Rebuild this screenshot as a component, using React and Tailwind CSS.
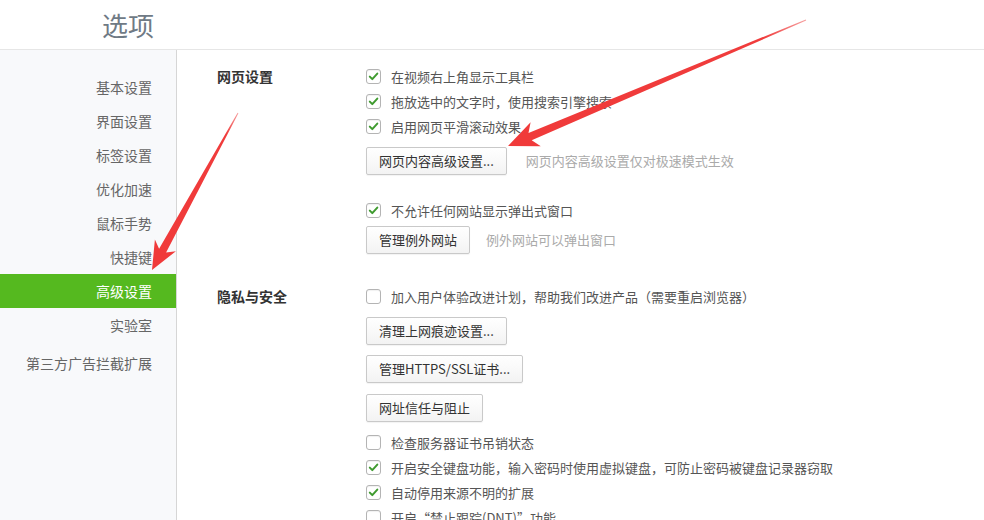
import React from "react";

const font = { fontFamily: '"Noto Sans CJK SC", "Noto Sans", sans-serif' };

function Check({ checked, label }) {
  return (
    <div className="flex items-center h-[25px]">
      <span className="w-[15px] h-[15px] rounded-[3px] border border-[#b4b4b4] bg-white flex items-center justify-center shadow-[inset_0_1px_1px_rgba(0,0,0,0.06)]">
        {checked && (
          <svg width="11" height="11" viewBox="0 0 11 11">
            <path d="M1.8 5.6 L4.3 8.1 L9.3 2.6" fill="none" stroke="#3f9b2f" strokeWidth="2" strokeLinecap="round" strokeLinejoin="round" />
          </svg>
        )}
      </span>
      <span className="ml-[10px] text-[13px] text-[#555]">{label}</span>
    </div>
  );
}

function Btn({ children, hint, hintGap = "ml-[19px]", className = "" }) {
  return (
    <div className={"flex items-center " + className}>
      <button className="h-[28px] px-[12px] border border-[#c9c9c9] rounded-[2px] bg-gradient-to-b from-white to-[#f3f3f3] text-[13px] text-[#333] shadow-[0_1px_1px_rgba(0,0,0,0.05)]">
        {children}
      </button>
      {hint && <span className={hintGap + " text-[13px] text-[#aaa]"}>{hint}</span>}
    </div>
  );
}

const items = ["基本设置", "界面设置", "标签设置", "优化加速", "鼠标手势", "快捷键", "高级设置", "实验室"];

export default function App() {
  return (
    <div className="relative w-[984px] h-[520px] overflow-hidden bg-white" style={font}>
      <div className="h-[50px] border-b border-[#e6e6e6] flex items-center pl-[102px]">
        <span className="text-[26px] text-[#6f7a85] leading-none">选项</span>
      </div>
      <div className="flex h-[470px]">
        <div className="w-[177px] shrink-0 bg-[#f8f9fb] border-r border-[#d6d6d6] pt-[20px]">
          {items.map((t) => (
            <div
              key={t}
              className={
                "h-[34px] flex items-center justify-end pr-[24px] text-[14px] " +
                (t === "高级设置" ? "bg-[#55b91f] text-white" : "text-[#666]")
              }
            >
              {t}
            </div>
          ))}
          <div className="h-[34px] mt-[4px] flex items-center justify-end pr-[24px] text-[14px] text-[#666]">第三方广告拦截扩展</div>
        </div>
        <div className="flex-1 pl-[40px] pt-[14px]">
          <div className="flex">
            <div className="w-[149px] h-[25px] flex items-center text-[14px] font-bold text-[#333]">网页设置</div>
            <div className="flex flex-col">
              <Check checked label="在视频右上角显示工具栏" />
              <Check checked label="拖放选中的文字时，使用搜索引擎搜索" />
              <Check checked label="启用网页平滑滚动效果" />
              <Btn className="mt-[8px]" hint="网页内容高级设置仅对极速模式生效">
                网页内容高级设置...
              </Btn>
              <div className="mt-[23px]">
                <Check checked label="不允许任何网站显示弹出式窗口" />
              </div>
              <Btn className="mt-[3px]" hint="例外网站可以弹出窗口" hintGap="ml-[16px]">
                管理例外网站
              </Btn>
            </div>
          </div>
          <div className="flex mt-[30px]">
            <div className="w-[149px] h-[25px] flex items-center text-[14px] font-bold text-[#333]">隐私与安全</div>
            <div className="flex flex-col">
              <Check label="加入用户体验改进计划，帮助我们改进产品（需要重启浏览器）" />
              <Btn className="mt-[8px]">清理上网痕迹设置...</Btn>
              <Btn className="mt-[10px]">管理HTTPS/SSL证书...</Btn>
              <Btn className="mt-[11px]">网址信任与阻止</Btn>
              <div className="mt-[8px]">
                <Check label="检查服务器证书吊销状态" />
                <Check checked label="开启安全键盘功能，输入密码时使用虚拟键盘，可防止密码被键盘记录器窃取" />
                <Check checked label="自动停用来源不明的扩展" />
                <Check label="开启“禁止跟踪(DNT)”功能" />
              </div>
            </div>
          </div>
        </div>
      </div>
      <svg className="absolute left-0 top-0 pointer-events-none" width="984" height="520">
        <defs>
          <linearGradient id="g1" x1="806" y1="20" x2="520" y2="140" gradientUnits="userSpaceOnUse">
            <stop offset="0" stopColor="#f6a0a0" />
            <stop offset="0.15" stopColor="#f03c3c" />
            <stop offset="1" stopColor="#f03a3a" />
          </linearGradient>
          <linearGradient id="g2" x1="238" y1="113" x2="160" y2="255" gradientUnits="userSpaceOnUse">
            <stop offset="0" stopColor="#f6a0a0" />
            <stop offset="0.15" stopColor="#f03c3c" />
            <stop offset="1" stopColor="#f03a3a" />
          </linearGradient>
        </defs>
        <polygon
          fill="url(#g1)"
          points="508,146 540.8,146.3 531.7,140.3 806.2,20.5 805.8,19.5 528.5,132.9 530.6,122.3"
        />
        <polygon
          fill="url(#g2)"
          points="152,270 175.9,251.2 166.1,252.6 238.4,113.2 237.6,112.8 159.1,248.8 154.9,239.6"
        />
      </svg>
    </div>
  );
}
